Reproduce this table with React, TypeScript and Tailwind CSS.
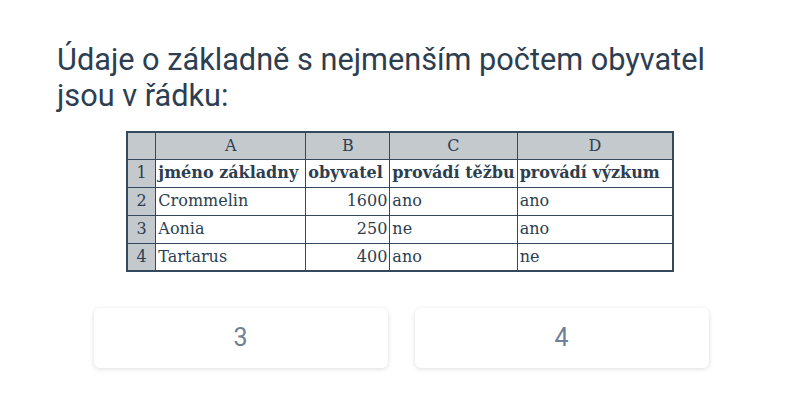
import React from "react";

const rows = [
  ["1", "jméno základny", "obyvatel", "provádí těžbu", "provádí výzkum"],
  ["2", "Crommelin", "1600", "ano", "ano"],
  ["3", "Aonia", "250", "ne", "ano"],
  ["4", "Tartarus", "400", "ano", "ne"],
];

export default function App() {
  return (
    <div className="w-[800px] h-[400px] bg-white overflow-hidden" style={{ fontFamily: "Roboto, sans-serif" }}>
      <div className="pl-[57px] w-[740px] pt-[42px] text-[30.7px] leading-[36px] text-[#2c3e50]">
        Údaje o základně s nejmenším počtem obyvatel jsou v řádku:
      </div>
      <div className="flex justify-center mt-[17px]">
        <table
          className="border-collapse border-2 border-[#34495e] text-[16px] leading-[20px] text-[#2c3e50]"
          style={{ fontFamily: '"DejaVu Serif", serif' }}
        >
          <thead>
            <tr className="h-[27px] bg-[#c4c9ce]">
              <th className="w-[29px] border border-[#34495e] font-normal"></th>
              <th className="w-[150px] border border-[#34495e] font-normal">A</th>
              <th className="w-[84px] border border-[#34495e] font-normal">B</th>
              <th className="w-[127px] border border-[#34495e] font-normal">C</th>
              <th className="w-[156px] border border-[#34495e] font-normal">D</th>
            </tr>
          </thead>
          <tbody>
            {rows.map((r, i) => (
              <tr key={i} className="h-[28px]">
                <td className="bg-[#c4c9ce] border border-[#34495e] text-center">{r[0]}</td>
                {r.slice(1).map((c, j) => (
                  <td
                    key={j}
                    className={
                      "border border-[#34495e] px-[2px] whitespace-nowrap " +
                      (i === 0 ? "font-bold " : "") +
                      (j === 1 && i > 0 ? "text-right" : "text-left")
                    }
                  >
                    {c}
                  </td>
                ))}
              </tr>
            ))}
          </tbody>
        </table>
      </div>
      <div className="flex justify-center gap-[27px] mt-[36px] ml-[2px]">
        {["3", "4"].map((t) => (
          <div
            key={t}
            className="w-[294px] h-[60px] rounded-[6px] bg-white shadow-[0_1px_5px_rgba(0,0,0,0.14)] flex items-center justify-center text-[25px] text-[#6f7f94]"
          >
            {t}
          </div>
        ))}
      </div>
    </div>
  );
}
